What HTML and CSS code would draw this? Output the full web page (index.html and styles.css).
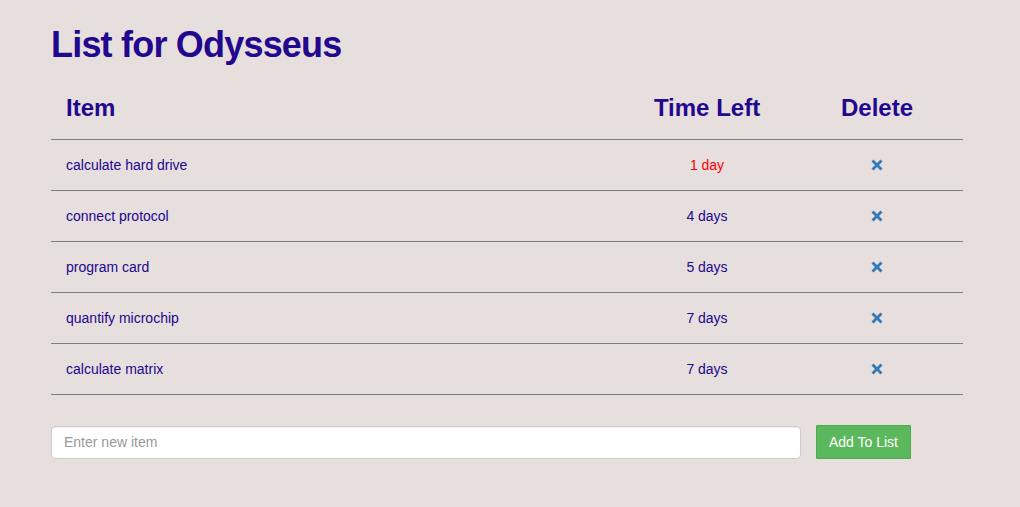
FILE: index.html
```html
<!DOCTYPE html>
<html>
<head>
<meta charset="utf-8">
<link rel="stylesheet" href="styles.css">
</head>
<body>
<div class="container">
  <h1 class="title">List for Odysseus</h1>
  <table class="list">
    <thead>
      <tr><th class="c-item">Item</th><th class="c-time">Time Left</th><th class="c-del">Delete</th></tr>
    </thead>
    <tbody>
      <tr><td class="c-item">calculate hard drive</td><td class="c-time urgent">1 day</td><td class="c-del"><svg class="x" viewBox="0 0 12 12"><path d="M0.5 2.5 L2.5 0.5 L6 4 L9.5 0.5 L11.5 2.5 L8 6 L11.5 9.5 L9.5 11.5 L6 8 L2.5 11.5 L0.5 9.5 L4 6 Z"/></svg></td></tr>
      <tr><td class="c-item">connect protocol</td><td class="c-time">4 days</td><td class="c-del"><svg class="x" viewBox="0 0 12 12"><path d="M0.5 2.5 L2.5 0.5 L6 4 L9.5 0.5 L11.5 2.5 L8 6 L11.5 9.5 L9.5 11.5 L6 8 L2.5 11.5 L0.5 9.5 L4 6 Z"/></svg></td></tr>
      <tr><td class="c-item">program card</td><td class="c-time">5 days</td><td class="c-del"><svg class="x" viewBox="0 0 12 12"><path d="M0.5 2.5 L2.5 0.5 L6 4 L9.5 0.5 L11.5 2.5 L8 6 L11.5 9.5 L9.5 11.5 L6 8 L2.5 11.5 L0.5 9.5 L4 6 Z"/></svg></td></tr>
      <tr><td class="c-item">quantify microchip</td><td class="c-time">7 days</td><td class="c-del"><svg class="x" viewBox="0 0 12 12"><path d="M0.5 2.5 L2.5 0.5 L6 4 L9.5 0.5 L11.5 2.5 L8 6 L11.5 9.5 L9.5 11.5 L6 8 L2.5 11.5 L0.5 9.5 L4 6 Z"/></svg></td></tr>
      <tr><td class="c-item">calculate matrix</td><td class="c-time">7 days</td><td class="c-del"><svg class="x" viewBox="0 0 12 12"><path d="M0.5 2.5 L2.5 0.5 L6 4 L9.5 0.5 L11.5 2.5 L8 6 L11.5 9.5 L9.5 11.5 L6 8 L2.5 11.5 L0.5 9.5 L4 6 Z"/></svg></td></tr>
    </tbody>
  </table>
  <form class="add-form">
    <input class="add-input" type="text" placeholder="Enter new item">
    <button class="add-btn" type="button">Add To List</button>
  </form>
</div>
</body>
</html>
```

FILE: styles.css
```css
html, body {
  margin: 0;
  padding: 0;
  background: #e6dfde;
  font-family: "Liberation Sans", Arial, sans-serif;
  color: #22078f;
}
.container {
  width: 912px;
  margin-left: 51px;
  padding-top: 25px;
}
.title {
  margin: 0;
  font-size: 36px;
  line-height: 40px;
  font-weight: bold;
  letter-spacing: -0.8px;
  color: #22078f;
}
.list {
  width: 100%;
  border-collapse: collapse;
  margin-top: 18px;
}
.list th {
  font-size: 24px;
  line-height: 34px;
  font-weight: bold;
  padding: 8px 15px 14px;
  border-bottom: 1px solid #808080;
}
.list td {
  font-size: 14px;
  line-height: 20px;
  padding: 15px 15px 15px;
  border-bottom: 1px solid #808080;
  color: #22078f;
}
.c-item { text-align: left; }
.c-time { text-align: center; width: 138px; }
.c-del { text-align: center; width: 142px; }
.list td.urgent { color: #ff0000; }
.x {
  width: 12px;
  height: 12px;
  fill: #337ab7;
  vertical-align: -1px;
}
.add-form {
  display: flex;
  gap: 15px;
  margin-top: 30px;
  align-items: center;
}
.add-input {
  width: 750px;
  height: 33px;
  box-sizing: border-box;
  border: 1px solid #cccccc;
  border-radius: 4px;
  padding: 6px 12px;
  font-family: "Liberation Sans", Arial, sans-serif;
  font-size: 14px;
  color: #555;
  background: #fff;
  box-shadow: inset 0 1px 1px rgba(0,0,0,0.075);
}
.add-input::placeholder { color: #999; }
.add-btn {
  height: 34px;
  padding: 6px 12px;
  border: 1px solid #4cae4c;
  background: #5cb85c;
  color: #fff;
  font-family: "Liberation Sans", Arial, sans-serif;
  font-size: 14px;
  border-radius: 1px;
}
```
